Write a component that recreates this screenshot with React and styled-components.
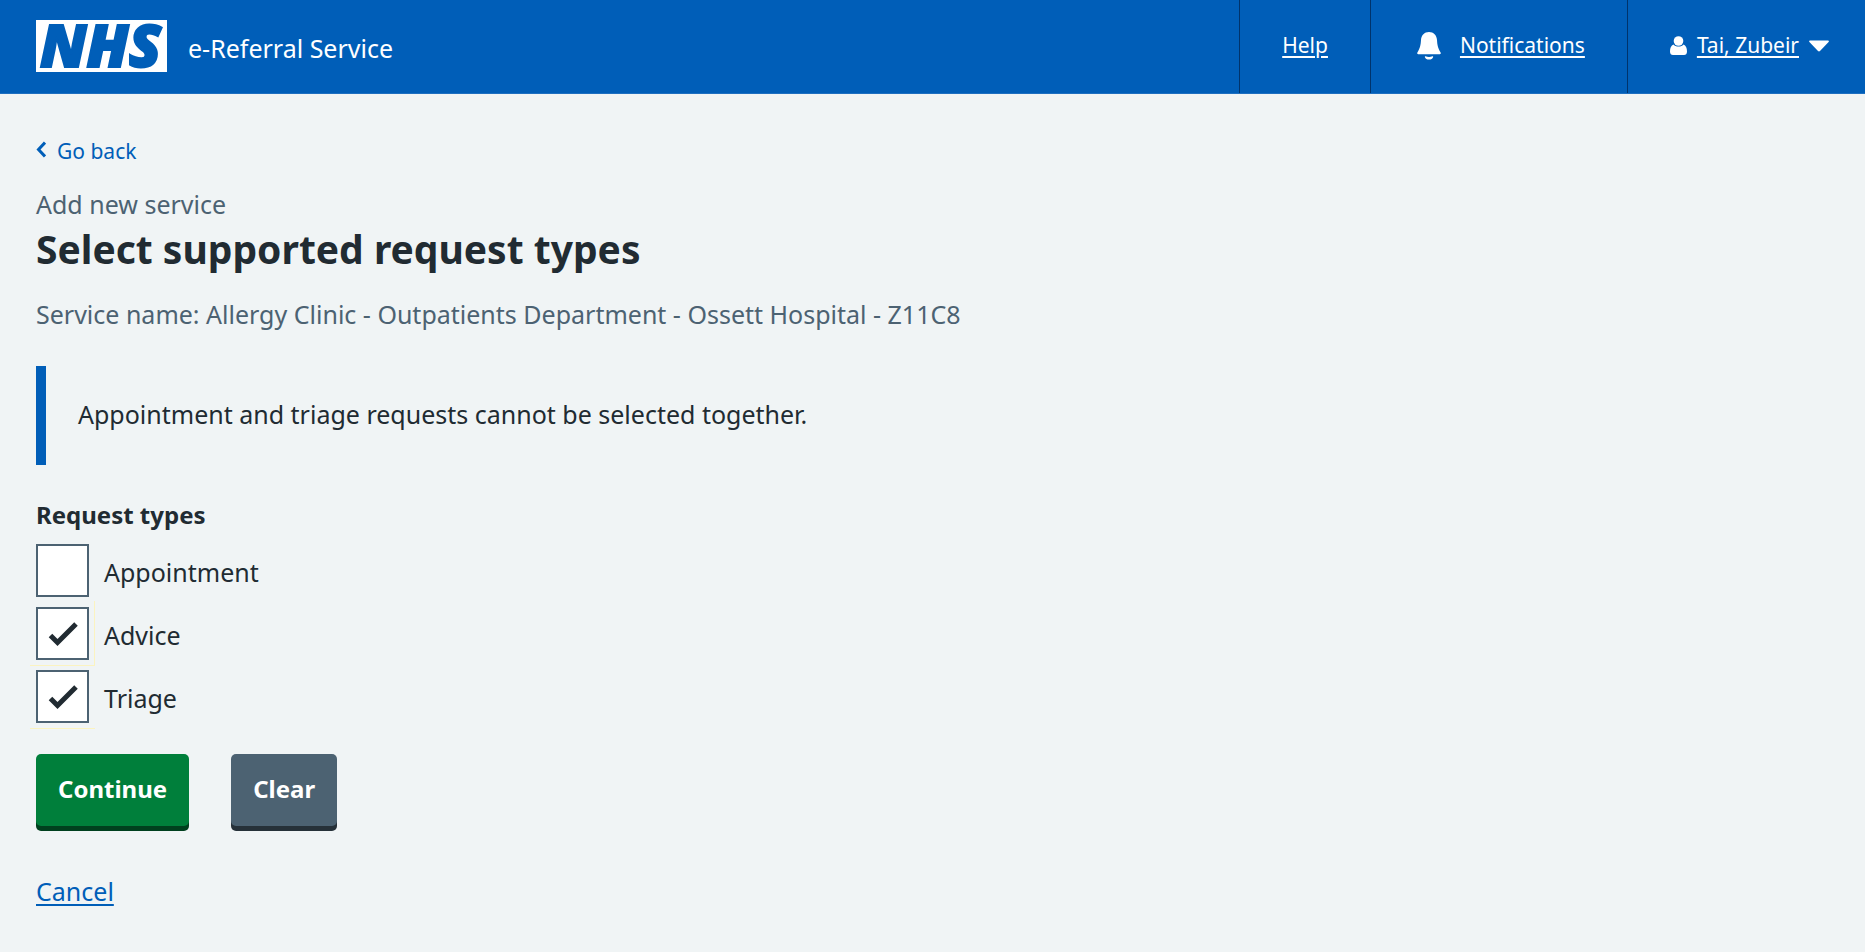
import React, { useState } from 'react'
import styled, { createGlobalStyle, ThemeProvider } from 'styled-components'

const theme = {
  blue: '#005eb8',
  page: '#f0f4f5',
  text: '#212b32',
  textSecondary: '#4c6272',
  headerRule: '#1e6fc0',
  navRule: '#00336b',
  focus: '#fbf3c0',
}

const GlobalStyle = createGlobalStyle`
  *, *::before, *::after {
    box-sizing: border-box;
  }

  body {
    margin: 0;
    background: ${theme.page};
    color: ${theme.text};
    font-family: 'Noto Sans', 'Open Sans', sans-serif;
    font-size: 25px;
    line-height: 36px;
  }
`

const Header = styled.header`
  display: flex;
  justify-content: space-between;
  min-height: 94px;
  padding: 0 36px;
  background: ${props => props.theme.blue};
  border-bottom: 1px solid ${props => props.theme.headerRule};
  color: white;
`

const Brand = styled.a`
  display: flex;
  align-items: center;
  gap: 21px;
  padding-bottom: 1px;
  color: white;
  font-size: 25px;
  text-decoration: none;
`

const Logo = styled.svg`
  display: block;
  width: 131px;
  height: 52px;
  overflow: visible;
`

const LogoText = styled.text`
  fill: ${props => props.theme.blue};
  stroke: ${props => props.theme.blue};
  stroke-width: 2;
  font-family: 'Open Sans', sans-serif;
  font-size: 59px;
  font-style: italic;
  font-weight: 800;
`

const BrandName = styled.span`
  padding-top: 4px;
`

const Nav = styled.nav`
  display: flex;
`

const NavItem = styled.div`
  display: flex;
  align-items: center;
  gap: ${props => props.$gap || 0}px;
  padding: 0 42px 3px;
  border-left: 1px solid ${props => props.theme.navRule};
  font-size: 21px;

  &:last-child {
    padding-right: 0;
  }
`

const NavLink = styled.a`
  color: white;
  text-decoration-thickness: 2px;
  text-underline-offset: 3px;
`

const Icon = styled.svg`
  display: block;
  flex: none;
  fill: currentColor;
`

const Main = styled.main`
  padding: 39px 36px 24px;
`

const BackLink = styled.a`
  display: inline-flex;
  align-items: center;
  gap: 11px;
  color: ${props => props.theme.blue};
  font-size: 21px;
  text-decoration: none;
`

const Caption = styled.span`
  display: block;
  color: ${props => props.theme.textSecondary};
  font-size: 25px;
  font-weight: 400;
  line-height: 36px;
`

const Title = styled.h1`
  margin: 17px 0 20px;
  font-size: 39px;
  font-weight: 700;
  line-height: 54px;
`

const ServiceName = styled.p`
  margin: 0;
  color: ${props => props.theme.textSecondary};
`

const Inset = styled.div`
  margin: 34px 0 32px;
  padding: 30px 32px 33px;
  border-left: 10px solid ${props => props.theme.blue};
`

const Fieldset = styled.fieldset`
  margin: 0;
  padding: 0;
  border: 0;
`

const Legend = styled.legend`
  margin-bottom: 11px;
  padding: 0;
  font-size: 24px;
  font-weight: 700;
`

const Options = styled.div`
  display: grid;
  gap: 10px;
`

const Option = styled.label`
  display: flex;
  align-items: center;
  gap: 15px;
  cursor: pointer;
`

const OptionText = styled.span`
  padding-top: 2px;
`

const Box = styled.span`
  position: relative;
  display: grid;
  width: 53px;
  height: 53px;

  > * {
    grid-area: 1 / 1;
  }

  &::after {
    position: absolute;
    inset: -6px;
    border: 0 solid ${props => props.theme.focus};
    border-right-width: ${props => props.$trail === 'corner' ? '1px' : 0};
    border-bottom-width: ${props => props.$trail ? '1px' : 0};
    content: '';
    pointer-events: none;
  }
`

const Tick = styled.svg`
  display: none;
  place-self: center;
  fill: none;
  stroke: ${props => props.theme.text};
  stroke-width: 5;
  pointer-events: none;
`

const Checkbox = styled.input`
  width: 53px;
  height: 53px;
  margin: 0;
  appearance: none;
  background: white;
  border: 2px solid ${props => props.theme.textSecondary};
  cursor: pointer;

  &:checked + ${Tick} {
    display: block;
    z-index: 1;
  }
`

const Actions = styled.div`
  display: flex;
  gap: 42px;
  margin: 31px 0 47px;
`

const Button = styled.button`
  padding: 17px 22px 19px;
  background: ${props => props.$secondary ? '#4c6272' : '#007f3b'};
  border: 0;
  border-radius: 5px;
  box-shadow: 0 5px 0 ${props => props.$secondary ? '#263139' : '#00401e'};
  color: white;
  font: inherit;
  font-size: 24px;
  font-weight: 700;
  cursor: pointer;
`

const CancelLink = styled.a`
  color: ${props => props.theme.blue};
  text-decoration-thickness: 2px;
  text-underline-offset: 3px;
`

const requestTypes = [
  { id: 'appointment', label: 'Appointment' },
  { id: 'advice', label: 'Advice', trail: 'corner' },
  { id: 'triage', label: 'Triage', trail: 'bottom' },
]

const initial = { appointment: false, advice: true, triage: true }

const NhsLogo = () => (
  <Logo viewBox="0 0 131 52" role="img" aria-label="NHS">
    <rect width="131" height="52" fill="white" />
    <LogoText x="4" y="47">NHS</LogoText>
  </Logo>
)

const BellIcon = () => (
  <Icon width="28" height="30" viewBox="-4 -2 28 30" aria-hidden="true">
    <path d="M12 0c4.600 0 7.600 3.200 8 8 .3 4.500.6 7.500 3.600 12.500.6 1 .2 1.700-.8 1.700H1.200c-1 0-1.400-.7-.8-1.700C3.400 15.500 3.700 12.500 4 8c.4-4.800 3.400-8 8-8z" />
    <path d="M8.500 24.300c2.300 1 4.700 1 7 0 .5 0 .8.400.6.900-.6 1.500-2 2.300-4.100 2.300s-3.500-.8-4.100-2.300c-.2-.5.1-.9.600-.9z" />
  </Icon>
)

const UserIcon = () => (
  <Icon width="17" height="19" viewBox="0 0 17 19" aria-hidden="true">
    <path d="M3.500 8.500C1.200 9.500 0 12 0 15.500 0 18 1.200 19 3 19h11c1.800 0 3-1 3-3.500 0-3.500-1.200-6-3.500-7-1.200 1.400-2.800 2.100-5 2.100s-3.800-.7-5-2.100z" />
    <circle cx="8.500" cy="5" r="4.800" />
  </Icon>
)

const CaretIcon = () => (
  <Icon width="20" height="14" viewBox="0 -2 20 14" aria-hidden="true">
    <path d="M1 .5h18c.9 0 1.200.8.6 1.400l-8.600 9.200c-.6.6-1.400.6-2 0L.4 1.900C-.2 1.300.1.500 1 .5z" />
  </Icon>
)

const BackIcon = () => (
  <svg width="10" height="20" viewBox="0 0 10 20" fill="none" stroke="currentColor" strokeWidth="3" aria-hidden="true">
    <path d="M9 1.500L2.500 8.500L9 15.500" />
  </svg>
)

const App = () => {
  const [selected, setSelected] = useState(initial)

  const toggle = id => setSelected({ ...selected, [id]: !selected[id] })

  return (
    <ThemeProvider theme={theme}>
      <GlobalStyle />
      <Header>
        <Brand href="#home">
          <NhsLogo />
          <BrandName>e-Referral Service</BrandName>
        </Brand>
        <Nav aria-label="Account">
          <NavItem>
            <NavLink href="#help">Help</NavLink>
          </NavItem>
          <NavItem $gap={19}>
            <BellIcon />
            <NavLink href="#notifications">Notifications</NavLink>
          </NavItem>
          <NavItem $gap={10}>
            <UserIcon />
            <NavLink href="#account">Tai, Zubeir</NavLink>
            <CaretIcon />
          </NavItem>
        </Nav>
      </Header>
      <Main>
        <BackLink href="#back">
          <BackIcon />
          Go back
        </BackLink>
        <Title>
          <Caption>Add new service</Caption>
          Select supported request types
        </Title>
        <ServiceName>
          Service name: Allergy Clinic - Outpatients Department - Ossett Hospital - Z11C8
        </ServiceName>
        <Inset>Appointment and triage requests cannot be selected together.</Inset>
        <form onSubmit={e => e.preventDefault()}>
          <Fieldset>
            <Legend>Request types</Legend>
            <Options>
              {requestTypes.map(({ id, label, trail }) => (
                <Option key={id} htmlFor={id}>
                  <Box $trail={trail}>
                    <Checkbox
                      type="checkbox"
                      id={id}
                      name="requestTypes"
                      value={id}
                      checked={Boolean(selected[id])}
                      onChange={() => toggle(id)}
                    />
                    <Tick width="30" height="26" viewBox="0 0 30 26">
                      <path d="M2.500 14.500L9.500 21.500L28 3" />
                    </Tick>
                  </Box>
                  <OptionText>{label}</OptionText>
                </Option>
              ))}
            </Options>
          </Fieldset>
          <Actions>
            <Button type="submit">Continue</Button>
            <Button type="button" $secondary onClick={() => setSelected({})}>Clear</Button>
          </Actions>
        </form>
        <CancelLink href="#cancel">Cancel</CancelLink>
      </Main>
    </ThemeProvider>
  )
}

export default App
